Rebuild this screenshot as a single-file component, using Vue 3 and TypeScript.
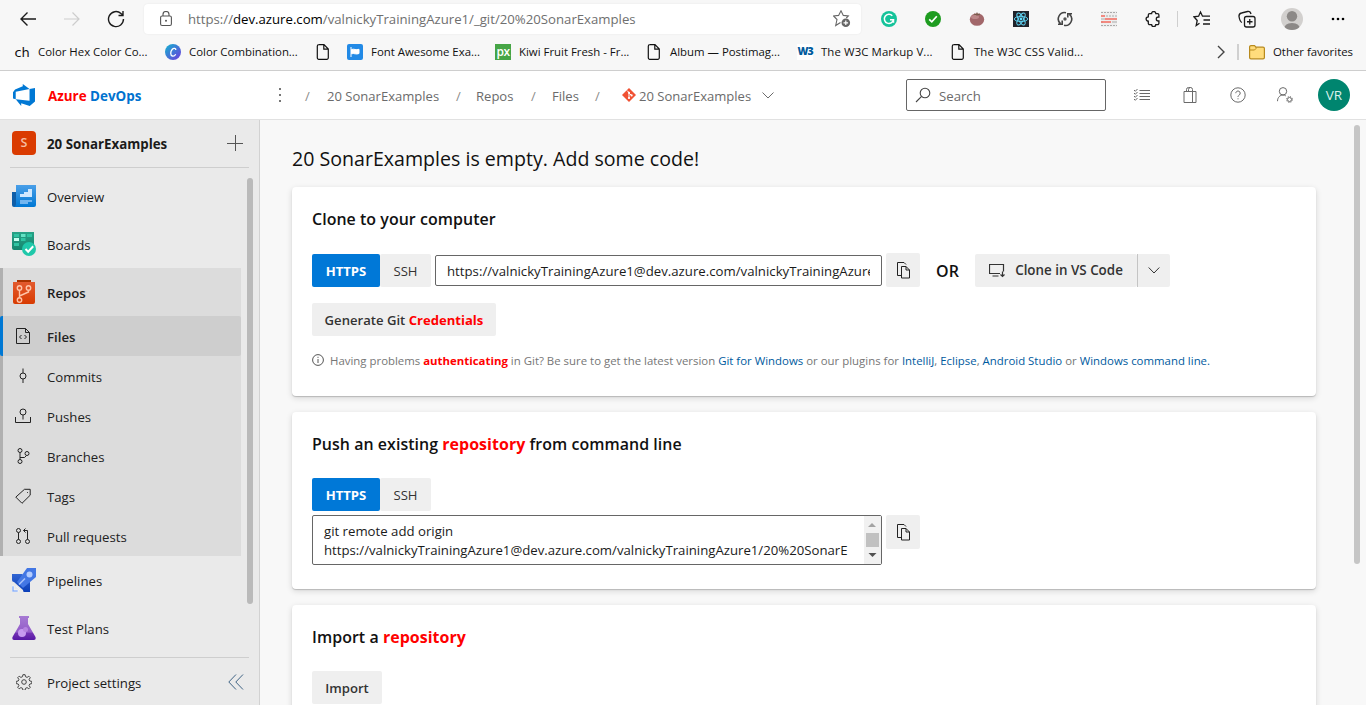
<script setup lang="ts">
interface SubItem {
  label: string
  path: string
  active?: boolean
}

const subItems: SubItem[] = [
  { label: 'Files', active: true, path: 'M1.500 .5h9l4 4v11h-13zM10.500 .5v4h4M6.500 7l-2 2 2 2M9.500 7l2 2-2 2' },
  { label: 'Commits', path: 'M8 .5v4.500M8 11v4M11 8a3 3 0 1 1-6 0a3 3 0 1 1 6 0' },
  { label: 'Pushes', path: 'M11 4a3 3 0 1 1-6 0a3 3 0 1 1 6 0M8 7v4.500M.5 9v5.500h15V9' },
  { label: 'Branches', path: 'M7 2.500a2 2 0 1 1-4 0a2 2 0 1 1 4 0M7 13.500a2 2 0 1 1-4 0a2 2 0 1 1 4 0M14 5.500a2 2 0 1 1-4 0a2 2 0 1 1 4 0M5 4.500v7M5 9.500h4.500l2-2' },
  { label: 'Tags', path: 'M9.500 1.300h5.700v5.900L7 15.300.8 9.100zM12 4.500h.8' },
  { label: 'Pull requests', path: 'M5.500 2.500a2 2 0 1 1-4 0a2 2 0 1 1 4 0M5.500 13.500a2 2 0 1 1-4 0a2 2 0 1 1 4 0M14.500 13.500a2 2 0 1 1-4 0a2 2 0 1 1 4 0M3.500 4.500v7M12.500 11.500V2.500h-4M10.500 .5l-2 2 2 2' },
]

const copyPath = 'M6 13.500H2.500V.5h6.500l2 2M6.500 4.500h4.500l3.500 3.500v8h-8zM11 4.500v3.500h3.500'
const pagePath = 'M3.500 .7h5.500l4.300 4.300v8.800a1.500 1.500 0 0 1-1.500 1.500h-8a1.500 1.500 0 0 1-1.500-1.500v-11.600a1.500 1.500 0 0 1 1.500-1.500zM8.800 .7v4.500h4.500'
const cloneUrl = 'https://valnickyTrainingAzure1@dev.azure.com/valnickyTrainingAzure'
</script>

<template>
  <div class="page">
    <header class="browser">
      <div class="toolbar">
        <svg class="i18" viewBox="0 0 18 18"><path d="M17 9H2M8.500 2.500L2 9l6.500 6.500" class="s14" /></svg>
        <svg class="i18 faded" viewBox="0 0 18 18"><path d="M1 9h15M9.500 2.500L16 9l-6.500 6.500" class="s12" /></svg>
        <svg class="i18" viewBox="0 0 18 18"><path d="M16.500 9A7.500 7.500 0 1 1 14 3.500L16 5M16 1v4.500h-4.500" class="s14" /></svg>
        <div class="address">
          <svg class="lock" viewBox="0 0 14 16"><rect x="1.600" y="5" width="10.800" height="9.500" rx="1.500" class="s11" /><path d="M4 5V3.500a3 3 0 0 1 6 0V5" class="s11" /><circle cx="7" cy="9.700" r="1" fill="#555" /></svg>
          <span class="url">https://<b>dev.azure.com</b>/valnickyTrainingAzure1/_git/20%20SonarExamples</span>
          <svg class="i18 grey" viewBox="0 0 18 18"><path d="M7.500 12.500l-4.800 3 1.300-6L.6 6l5-.6L8 .8l2.300 4.600 5 .6-2 2" class="s11" /><circle cx="12.800" cy="12.800" r="4.300" fill="#666" /><path d="M12.800 10.500v4.600M10.500 12.800h4.600" stroke="#fff" stroke-width="1.200" /></svg>
        </div>
        <div class="extensions">
          <svg viewBox="0 0 16 16"><circle cx="8" cy="8" r="8" fill="#15c39a" /><path d="M11.300 4.700A4.600 4.600 0 1 0 12.500 8.700H9M12.500 8.700v3" fill="none" stroke="#fff" stroke-width="1.500" /></svg>
          <svg viewBox="0 0 16 16"><circle cx="8" cy="8" r="8" fill="#1e9c20" /><path d="M4.200 8.400l2.600 2.500 5-5.600" fill="none" stroke="#fff" stroke-width="1.700" /></svg>
          <svg viewBox="0 0 16 16"><ellipse cx="8" cy="8.500" rx="7.200" ry="6.300" fill="#a2676a" /><ellipse cx="6" cy="6" rx="4" ry="2" fill="#bc8788" /><path d="M5 3l3 1 3-1M8 1.500V4" stroke="#755b48" fill="none" /></svg>
          <svg viewBox="0 0 16 16"><rect width="16" height="16" fill="#20232a" /><g fill="none" stroke="#61dafb" stroke-width=".9"><ellipse cx="8" cy="8" rx="6.700" ry="2.600" /><ellipse cx="8" cy="8" rx="6.700" ry="2.600" transform="rotate(60 8 8)" /><ellipse cx="8" cy="8" rx="6.700" ry="2.600" transform="rotate(120 8 8)" /></g><circle cx="8" cy="8" r="1.400" fill="#61dafb" /></svg>
          <svg viewBox="0 0 16 16"><path d="M9 1.700A6.300 6.300 0 0 0 3.500 12.600M7 14.300A6.300 6.300 0 0 0 12.500 3.400M1 13.300h4.200V9.600M15 2.700h-4.200v3.700" fill="none" stroke="#444" stroke-width="1.600" /><circle cx="8" cy="8" r="1.700" fill="#555" /></svg>
          <svg viewBox="0 0 16 16"><rect width="16" height="16" fill="#eee" /><path d="M0 1.500h16M5 5h11M0 11h3M0 14.500h16" stroke="#aaa" stroke-dasharray="2 1" /><path d="M0 5h4M4 8h12M0 11h10" stroke="#f4695e" stroke-width="1.600" /><path d="M0 8h4M11 11h5" stroke="#aaa" /></svg>
          <svg viewBox="0 0 16 16"><path d="M4.700 2.600h1.900a2.100 2.100 0 0 1 4.200 0h1.700a1.400 1.400 0 0 1 1.400 1.400v2h-.6a2 2 0 0 0 0 4h.6v2.200a1.400 1.400 0 0 1-1.400 1.400h-1.700a2.100 2.100 0 0 1-4.200 0H4.700A1.400 1.400 0 0 1 3.300 12.200V10.200a2.200 2.200 0 0 1 0-4.400V4A1.400 1.400 0 0 1 4.700 2.600z" class="s13" /></svg>
        </div>
        <i class="tool-divider"></i>
        <div class="tools">
          <svg class="i18" viewBox="0 0 18 18"><path d="M6.500 13.200l-3.300 2.300 1-5L1 6.800l4.600-.6L7.500 2l2 4.200H17M10.500 10H17M10 14h7" class="s13" /></svg>
          <svg class="i18" viewBox="0 0 18 18"><rect x="6.500" y="6.500" width="10.500" height="10.500" rx="2" class="s13" /><path d="M11.750 9v5.500M9 11.750h5.500M4 12.500C2.500 12 1.500 9.500 1 6.500.8 4.500 1.700 3.400 3.500 3l6-1.500c2-.4 3 .5 3.500 2.500" class="s13" /></svg>
          <svg class="profile" viewBox="0 0 22 22"><defs><clipPath id="profile-clip"><circle cx="11" cy="11" r="11" /></clipPath></defs><g clip-path="url(#profile-clip)"><rect width="22" height="22" fill="#d2d0ce" /><circle cx="11" cy="8.300" r="5.200" fill="#8c8987" /><path d="M3 22q0-7 8-7t8 7z" fill="#8c8987" /></g></svg>
          <svg class="i18" viewBox="0 0 18 18"><circle cx="4" cy="9" r="1.300" /><circle cx="9" cy="9" r="1.300" /><circle cx="14" cy="9" r="1.300" /></svg>
        </div>
      </div>
      <nav class="bookmarks">
        <span class="bm"><em class="ch">ch</em><span>Color Hex Color Co...</span></span>
        <span class="bm"><svg viewBox="0 0 16 16"><defs><linearGradient id="canva" x1="0" y1="0" x2="1" y2="1"><stop offset="0" stop-color="#12b5d0" /><stop offset="1" stop-color="#7038dc" /></linearGradient></defs><circle cx="8" cy="8" r="8" fill="url(#canva)" /><path d="M10.800 6c.2-1.600-2-2.500-3.700-.5S5 11.500 7.500 12c1.300.2 2.600-.7 3.200-1.800" stroke="#fff" fill="none" stroke-width="1.300" /></svg><span>Color Combination...</span></span>
        <span class="bm"><svg viewBox="0 0 16 16"><path :d="pagePath" class="s12" /></svg></span>
        <span class="bm"><svg viewBox="0 0 16 16"><rect width="16" height="16" rx="2" fill="#228ae6" /><path d="M4 3v10M4.500 5.500c2.500-1 4.500 1 7.500-.2v4.200c-3 1.400-5-.7-7.500.3z" fill="#fff" stroke="#fff" /></svg><span>Font Awesome Exa...</span></span>
        <span class="bm"><em class="px">px</em><span>Kiwi Fruit Fresh - Fr...</span></span>
        <span class="bm"><svg viewBox="0 0 16 16"><path :d="pagePath" class="s12" /></svg><span>Album — Postimag...</span></span>
        <span class="bm"><em class="w3">W3</em><span class="wide">The W3C Markup V...</span></span>
        <span class="bm"><svg viewBox="0 0 16 16"><path :d="pagePath" class="s12" /></svg><span class="wide">The W3C CSS Valid...</span></span>
        <svg class="more" viewBox="0 0 10 16"><path d="M2 2l6 6-6 6" class="s14" /></svg>
        <i class="bm-divider"></i>
        <span class="bm"><svg viewBox="0 0 16 16"><path d="M.6 3a1.400 1.400 0 0 1 1.400-1.400h3.500L7 3.200h7A1.400 1.400 0 0 1 15.400 4.600v8.800A1.400 1.400 0 0 1 14 14.800H2A1.400 1.400 0 0 1 .6 13.400z" fill="#ffdc7c" stroke="#b88a1e" stroke-width="1.200" /><path d="M1 6h4.500L7 4.500V3.200" fill="none" stroke="#b88a1e" /></svg><span>Other favorites</span></span>
      </nav>
    </header>

    <header class="topbar">
      <svg class="logo" viewBox="0 0 24 24"><path fill="#0078d4" d="M0 8.877L2.247 5.910l8.405-3.416V.022l7.370 5.393L2.966 8.338v8.225L0 15.707zm24-4.450v14.651l-5.753 4.900-9.303-3.057v3.056l-5.978-7.416 15.057 1.798V5.415z" /></svg>
      <span class="brand"><b class="hit">Azure</b> DevOps</span>
      <svg class="dots" viewBox="0 0 4 16"><path d="M1 1h2v2H1zM1 7h2v2H1zM1 13h2v2H1z" /></svg>
      <nav class="crumbs">
        <i>/</i><span>20 SonarExamples</span><i>/</i><span>Repos</span><i>/</i><span>Files</span><i>/</i>
        <svg class="git" viewBox="0 0 14 14"><path d="M7 0l7 7-7 7-7-7z" fill="#f05133" /><path d="M5 2.500L7 4.500v6M7 5l2.500 2.500" stroke="#fff" fill="none" /><circle cx="7" cy="4.800" r="1.100" fill="#fff" /><circle cx="7" cy="10" r="1.100" fill="#fff" /><circle cx="9.600" cy="7.400" r="1.100" fill="#fff" /></svg>
        <span>20 SonarExamples</span>
        <svg class="down" viewBox="0 0 12 12"><path d="M.5 3.500L6 9l5.500-5.500" class="s1" /></svg>
      </nav>
      <div class="search">
        <svg viewBox="0 0 16 16"><circle cx="10" cy="6" r="4.800" class="s11" /><path d="M6.600 9.400L1 15" class="s11" /></svg>
        <span>Search</span>
      </div>
      <div class="top-icons">
        <svg viewBox="0 0 16 16"><path d="M5.500 3.500H16M5.500 6.500H16M5.500 9.500H16M5.500 12.500H16M0 3l1.300 1.300L3.500 2M0 6l1.300 1.300L3.500 5M0 9l1.300 1.300L3.500 8M0 12l1.300 1.300L3.500 11" class="s1" /></svg>
        <svg viewBox="0 0 16 16"><path d="M2 4.500h12v11H2zM4.500 4.500V2.500q0-2 2-2h2q2 0 2 2v13M6.500 4.500V2.500q0-2 2-2" class="s1" /></svg>
        <svg viewBox="0 0 16 16"><circle cx="8" cy="8" r="7.200" class="s1" /><path d="M5.800 6.200a2.200 2.200 0 1 1 3.600 1.700C8.400 8.700 8 9 8 10M8 11.300v1" class="s1" /></svg>
        <svg viewBox="0 0 16 16"><circle cx="6" cy="4.300" r="3.700" class="s1" /><path d="M.5 14.200C.5 10.500 3 8 6 8q1.500 0 2.800.9" class="s1" /><circle cx="12.500" cy="12.500" r="2" class="s1" /><circle cx="12.500" cy="12.500" r="3" class="s1" stroke-dasharray="1.100 1.260" /></svg>
      </div>
      <span class="avatar">VR</span>
    </header>

    <div class="body">
      <aside class="sidebar">
        <div class="project">
          <span class="project-icon">S</span>
          <span class="project-name">20 SonarExamples</span>
          <svg class="plus" viewBox="0 0 16 16"><path d="M8.500 0v16M0 8.500h16" class="s1" /></svg>
        </div>
        <div class="nav-scroll">
          <a class="hub"><svg viewBox="0 0 24 24"><defs><linearGradient id="ov" x2="0" y2="1"><stop stop-color="#4a9fe8" /><stop offset="1" stop-color="#0078d4" /></linearGradient></defs><path d="M0 8h6v15H2q-2 0-2-2z" fill="#0f5ea8" /><path d="M4 1h20v20q0 2-2 2H2q2-1 2-3z" fill="url(#ov)" /><path d="M8 10h4V8h4V5h4v8H8z" fill="#cfe8ff" /><path d="M8 16h12v2h-4v2H8z" fill="#72b6f0" /></svg><span>Overview</span></a>
          <a class="hub"><svg viewBox="0 0 24 24"><defs><linearGradient id="bo" x2="0" y2="1"><stop stop-color="#28a287" /><stop offset="1" stop-color="#14866e" /></linearGradient></defs><path d="M0 0h22v18H2q-2 0-2-2z" fill="url(#bo)" /><path d="M2 2h5v3H2zM15 2h5v3h-5zM2 11h5v3H2zM9 6h4.500v3H9z" fill="#2fc4a2" /><path d="M2 6h5v3H2z" fill="#c4fff0" /><path d="M9 2h4.500v3H9z" fill="#64e2c4" /><circle cx="17" cy="17" r="7" fill="#1fc8aa" /><path d="M13.500 17l2.700 2.700 5-5.400" stroke="#fff" stroke-width="2" fill="none" /></svg><span>Boards</span></a>
          <div class="group">
            <a class="hub current"><svg viewBox="0 0 24 24"><defs><linearGradient id="re" x2="0" y2="1"><stop stop-color="#e35a2e" /><stop offset="1" stop-color="#d83b01" /></linearGradient></defs><path d="M5 0h14v2h2v3H3V2h2z" fill="#a93300" /><path d="M1 2h22v20q0 2-2 2H3q-2 0-2-2z" fill="url(#re)" /><g fill="none" stroke="#ffc4a8" stroke-width="1.400"><circle cx="7.500" cy="8" r="2.200" /><circle cx="16.500" cy="8" r="2.200" /><circle cx="7.500" cy="20" r="2.200" /><path d="M7.500 10v7.800M16.500 10v2l-9 4" /></g></svg><span>Repos</span></a>
            <a v-for="item in subItems" :key="item.label" class="sub" :class="{ active: item.active }">
              <svg viewBox="0 0 16 16"><path :d="item.path" class="s1" /></svg><span>{{ item.label }}</span>
            </a>
          </div>
          <a class="hub"><svg viewBox="0 0 24 24"><defs><linearGradient id="pi" x2="0" y2="1"><stop stop-color="#3165d2" /><stop offset="1" stop-color="#0b3fb8" /></linearGradient></defs><path d="M0 6h10l8 8v10h-6q-1 0-1-2l-9-8q-2 0-2-2z" fill="url(#pi)" /><path d="M15 0h9v9L11 20l-6-6z" fill="#4377e4" /><circle cx="17.500" cy="6.500" r="3" fill="#b3ccff" /><path d="M7 16.500l6-6" stroke="#a8c2fa" stroke-width="1.600" /><path d="M0 18h2v4h4v2H0zM4 18l4 4" fill="#8fb2f8" stroke="#fff" stroke-width=".5" /></svg><span>Pipelines</span></a>
          <a class="hub"><svg viewBox="0 0 24 24"><defs><linearGradient id="te" x2="0" y2="1"><stop stop-color="#a67ad3" /><stop offset=".68" stop-color="#935bc9" /><stop offset=".7" stop-color="#7433b4" /><stop offset="1" stop-color="#5819a5" /></linearGradient></defs><path d="M7 0h10v2h-1v6l7.500 13q.8 3-1.500 3H2q-2.300 0-1.500-3L8 8V2H7z" fill="url(#te)" /><circle cx="10" cy="17" r="4" fill="#c79af0" /><circle cx="13.500" cy="13.500" r="2.500" fill="#b684e0" /></svg><span>Test Plans</span></a>
          <i class="thumb"></i>
        </div>
        <div class="settings">
          <svg viewBox="0 0 16 16"><path d="M6.900 .7h2.200l.4 2 1.600.7 1.700-1.200 1.500 1.500-1.200 1.700.7 1.600 2 .4v2.200l-2 .4-.7 1.600 1.200 1.700-1.500 1.500-1.700-1.200-1.600.7-.4 2H6.900l-.4-2-1.600-.7-1.700 1.200-1.500-1.500 1.200-1.700-.7-1.600-2-.4V7.400l2-.4.7-1.600-1.200-1.700 1.500-1.500 1.700 1.200 1.600-.7z" class="s1" /><circle cx="8" cy="8" r="2.300" class="s1" /></svg>
          <span>Project settings</span>
          <svg class="collapse" viewBox="0 0 16 16"><path d="M8 .5L.8 8 8 15.500M15 .5L7.800 8l7.200 7.500" class="s1" /></svg>
        </div>
      </aside>

      <main class="content">
        <h1>20 SonarExamples is empty. Add some code!</h1>
        <section class="card clone">
          <h2>Clone to your computer</h2>
          <div class="row">
            <span class="btn primary">HTTPS</span><span class="btn ssh">SSH</span>
            <div class="field"><span>{{ cloneUrl }}</span></div>
            <span class="btn copy"><svg viewBox="0 0 16 17"><path :d="copyPath" class="s1" /></svg></span>
            <strong class="or">OR</strong>
            <span class="btn vscode"><svg viewBox="0 0 16 16"><path d="M11 11.500H.5v-9h14v7M3.500 14h6M13.500 9.500v5M11.500 12.500l2 2 2-2" class="s12" /></svg><span>Clone in VS Code</span></span>
            <span class="btn split"><svg viewBox="0 0 12 12"><path d="M.7 3.500L6 9l5.300-5.500" class="s1" /></svg></span>
          </div>
          <div><span class="btn generate">Generate Git&nbsp;<b class="hit">Credentials</b></span></div>
          <p class="hint">
            <svg viewBox="0 0 12 12"><circle cx="6" cy="6" r="5.400" class="s1" /><path d="M6 5v4M6 2.800v1.100" class="s1" /></svg>
            <span>Having problems <b class="hit">authenticating</b> in Git? Be sure to get the latest version <a>Git for Windows</a> or our plugins for <a>IntelliJ</a>, <a>Eclipse</a>, <a>Android Studio</a> or <a>Windows command line.</a></span>
          </p>
        </section>
        <section class="card push">
          <h2>Push an existing <b class="hit">repository</b> from command line</h2>
          <div class="row"><span class="btn primary">HTTPS</span><span class="btn ssh">SSH</span></div>
          <div class="row area-row">
            <div class="area">
              <div class="lines"><span>git remote add origin</span><span>https://valnickyTrainingAzure1@dev.azure.com/valnickyTrainingAzure1/20%20SonarE</span></div>
              <div class="bar"><svg viewBox="0 0 16 48"><path d="M4 11h8L8 7z" fill="#a3a3a3" /><path d="M2 17h13v14H2z" fill="#c1c1c1" /><path d="M4.500 37h8l-4 4z" fill="#505050" /></svg></div>
            </div>
            <span class="btn copy"><svg viewBox="0 0 16 17"><path :d="copyPath" class="s1" /></svg></span>
          </div>
        </section>
        <section class="card import">
          <h2>Import a <b class="hit">repository</b></h2>
          <div><span class="btn import-btn">Import</span></div>
        </section>
        <i class="page-thumb"></i>
      </main>
    </div>
  </div>
</template>

<style>
body { overflow: hidden; }
</style>

<style scoped>
.page { width: 1366px; height: 705px; overflow: hidden; display: flex; flex-direction: column; font-family: "Open Sans", "Noto Sans", sans-serif; font-size: 13.2px; color: #1b1b1b; background: #f8f8f8; }
.page * { box-sizing: border-box; }
span, h1, h2, b, em { white-space: nowrap; }
svg { display: block; flex: none; }
i { font-style: normal; }
.s1, .s11, .s12, .s13, .s14 { fill: none; stroke: currentColor; stroke-width: 1; }
.s11 { stroke-width: 1.1; }
.s12 { stroke-width: 1.2; }
.s13 { stroke-width: 1.3; }
.s14 { stroke-width: 1.4; }
.i18 { width: 18px; height: 18px; }
.hit { color: #f00; font-weight: 700; }

.browser { height: 71px; flex: none; background: #f7f7f7; border-bottom: 1px solid #cecece; }
.toolbar { height: 38px; display: grid; grid-template-columns: 44px 44px 37px 717px 6px 308px 4px 180px; align-items: center; padding-left: 19px; }
.toolbar > * { align-self: center; }
.faded { color: #cdcdcd; }
.address { height: 30px; background: #fff; border-radius: 4px; box-shadow: 0 0 2px rgba(0, 0, 0, .08); display: flex; align-items: center; padding: 0 10px 0 15px; }
.lock { width: 14px; height: 16px; color: #555; margin-right: 15px; }
.url { flex: 1; color: #6f6f6f; font-size: 13.2px; }
.url b { font-weight: 400; color: #000; }
.grey { color: #666; }
.extensions { grid-column: 6; display: grid; grid-template-columns: repeat(7, 44px); justify-items: center; }
.extensions svg { width: 16px; height: 16px; }
.tool-divider { width: 1px; height: 16px; background: #cfcfcf; justify-self: center; }
.tools { display: grid; grid-template-columns: 46px 44px 46px 46px; justify-items: center; align-items: center; }
.profile { width: 22px; height: 22px; }
.bookmarks { height: 28px; display: grid; grid-template-columns: 151px 150px 32px 148px 151px 151px 153px 266px 21px 12px 110px; align-items: center; padding-left: 14px; font-size: 11.4px; color: #111; }
.bm { display: flex; align-items: center; gap: 8px; }
.bm > span { padding-bottom: 2px; }
.bm > .wide { letter-spacing: .1px; }
.bm svg, .bm em { width: 16px; height: 16px; flex: none; }
.bm em { font-style: normal; text-align: center; line-height: 15px; }
.ch { font-family: "DejaVu Sans", sans-serif; font-size: 13px; letter-spacing: -.3px; }
.bm .ch { line-height: 18px; }
.px { background: #46a546; color: #fff; font-size: 12px; font-weight: 600; letter-spacing: -.5px; }
.w3 { background: #fff; color: #005a9c; font-size: 10.500px; font-weight: 800; letter-spacing: -1px; }
.more { width: 10px; height: 16px; color: #444; }
.bm-divider { width: 2px; height: 16px; background: #d0d0d0; }

.topbar { height: 49px; flex: none; background: #fff; border-bottom: 1px solid #e1e1e1; display: grid; grid-template-columns: 35px 229px 26px 603px 200px 208px 32px; align-items: center; padding-left: 13px; }
.logo { width: 22px; height: 22px; }
.brand { color: #0072cf; font-weight: 700; font-size: 13.400px; padding-top: 2px; }
.dots { width: 4px; height: 16px; fill: #767676; margin-left: 1px; }
.crumbs { display: grid; grid-template-columns: 22px 129px 20px 55px 21px 43px 27px 17px 123px 12px; align-items: center; padding-left: 2px; color: #6b6b6b; font-size: 13.050px; }
.crumbs span, .crumbs i { padding-top: 2px; }
.crumbs i { color: #8c8c8c; }
.git { width: 14px; height: 14px; }
.down { width: 12px; height: 12px; }
.search { height: 32px; border: 1px solid #666; border-radius: 2px; display: flex; align-items: center; padding-left: 8px; gap: 8px; color: #6b6b6b; }
.search span { padding-top: 2px; }
.search svg { width: 16px; height: 16px; color: #444; }
.top-icons { display: grid; grid-template-columns: repeat(4, 47.8px); padding-left: 28px; color: #6a6a6a; }
.top-icons svg { width: 16px; height: 16px; }
.avatar { width: 32px; height: 32px; margin-left: 4px; border-radius: 50%; background: #00856f; color: #d9f1ec; font-size: 13.500px; display: grid; place-items: center; }

.body { flex: 1; min-height: 0; display: flex; }
.sidebar { width: 260px; flex: none; background: #eaeaea; border-right: 1px solid #d2d2d2; display: flex; flex-direction: column; }
.project { height: 48px; margin: 0 10px; border-bottom: 1px solid #cecece; display: flex; align-items: center; padding: 0 6px 2px 2px; }
.project-icon { width: 24px; height: 24px; border-radius: 4px; background: #da3b01; color: #f6bda4; display: grid; place-items: center; font-size: 12.500px; font-weight: 600; margin-right: 11px; }
.project-name { flex: 1; font-weight: 700; font-size: 13.300px; padding-top: 2px; }
.plus { width: 16px; height: 16px; color: #555; }
.nav-scroll { position: relative; height: 489px; padding-top: 4px; }
.hub, .sub { display: flex; align-items: center; color: #1b1b1b; }
.hub { height: 48px; padding-left: 12px; gap: 11px; }
.hub svg { width: 24px; height: 24px; }
.hub span, .sub span { padding-top: 1px; }
.group { width: 241px; background: #dcdcdc; border-left: 3px solid #b0b0b0; }
.group .hub { padding-left: 9px; }
.current, .active { font-weight: 600; font-size: 13.200px; }
.sub { height: 40px; padding-left: 12px; gap: 16px; color: #222; }
.sub svg { width: 16px; height: 16px; }
.active { background: #cecece; border-radius: 2px; margin-left: -3px; border-left: 3px solid #0078d4; }
.thumb { position: absolute; right: 6px; top: 10px; width: 6px; height: 426px; border-radius: 3px; background: #bababa; }
.settings { flex: 1; margin: 0 10px; border-top: 1px solid #cecece; display: flex; align-items: center; padding: 1px 5px 0 6px; gap: 15px; }
.settings svg { width: 16px; height: 16px; color: #444; }
.settings .collapse { color: #3f6384; }
.settings span { flex: 1; padding-top: 2px; }

.content { position: relative; flex: 1; padding: 24px 50px 0 32px; overflow: hidden; }
h1, h2, p { margin: 0; }
h1 { font-size: 19.600px; font-weight: 500; line-height: 28px; height: 43px; padding-top: 1px; color: #111; }
h2 { font-size: 15.950px; font-weight: 600; line-height: 24px; height: 24px; letter-spacing: .05px; color: #111; }
.card { background: #fff; border-radius: 4px; padding: 20px 20px 0; box-shadow: 0 1px 1px rgba(0, 0, 0, .18), 0 2px 6px rgba(0, 0, 0, .14); margin-bottom: 16px; }
.clone { height: 209px; }
.push { height: 177px; }
.import { height: 150px; }
.row { display: flex; align-items: center; margin-top: 22px; height: 34px; }
.btn { height: 33px; border-radius: 2px; background: #efefef; color: #333; font-weight: 600; font-size: 13.100px; display: inline-flex; align-items: center; justify-content: center; flex: none; }
.primary { width: 68px; background: #0078d7; color: #fff; font-weight: 700; }
.ssh { width: 51px; font-weight: 500; }
.primary, .ssh { padding-top: 1px; }
.push .primary, .push .ssh { position: relative; top: -1px; }
.field { width: 447px; height: 31px; margin-left: 4px; border: 1px solid #666; border-radius: 2px; padding: 1px 11px 0; display: flex; align-items: center; }
.field span { overflow: hidden; flex: 1; letter-spacing: .015px; }
.copy { width: 34px; height: 34px; margin-left: 4px; }
.copy svg { width: 16px; height: 17px; color: #222; }
.or { width: 55px; text-align: center; font-size: 16px; font-weight: 600; color: #111; padding-top: 1px; }
.vscode { width: 162px; gap: 10px; font-size: 13.400px; }
.vscode svg { width: 16px; height: 16px; }
.split { width: 33px; border-left: 1px solid #c4c4c4; border-radius: 0 2px 2px 0; }
.split svg { width: 12px; height: 12px; }
.generate { width: 184px; margin-top: 16px; }
.hint { display: flex; align-items: center; gap: 6px; margin-top: 15px; font-size: 11.400px; letter-spacing: .01px; color: #767676; }
.hint span { padding-top: 2px; }
.hint svg { width: 12px; height: 12px; color: #555; }
.hint a { color: #005a9e; }
.area-row { margin-top: 3px; height: 50px; align-items: flex-start; }
.area { width: 570px; height: 50px; border: 1px solid #666; border-radius: 2px; display: flex; }
.lines { flex: 1; display: flex; flex-direction: column; padding: 6px 0 0 11px; line-height: 19px; overflow: hidden; }
.bar { width: 17px; background: #f1f1f1; }
.bar svg { width: 16px; height: 48px; }
.import-btn { width: 70px; margin-top: 22px; }
.page-thumb { position: absolute; left: 1094px; top: 5px; width: 6px; height: 439px; border-radius: 3px; background: #c6c6c6; }
</style>
